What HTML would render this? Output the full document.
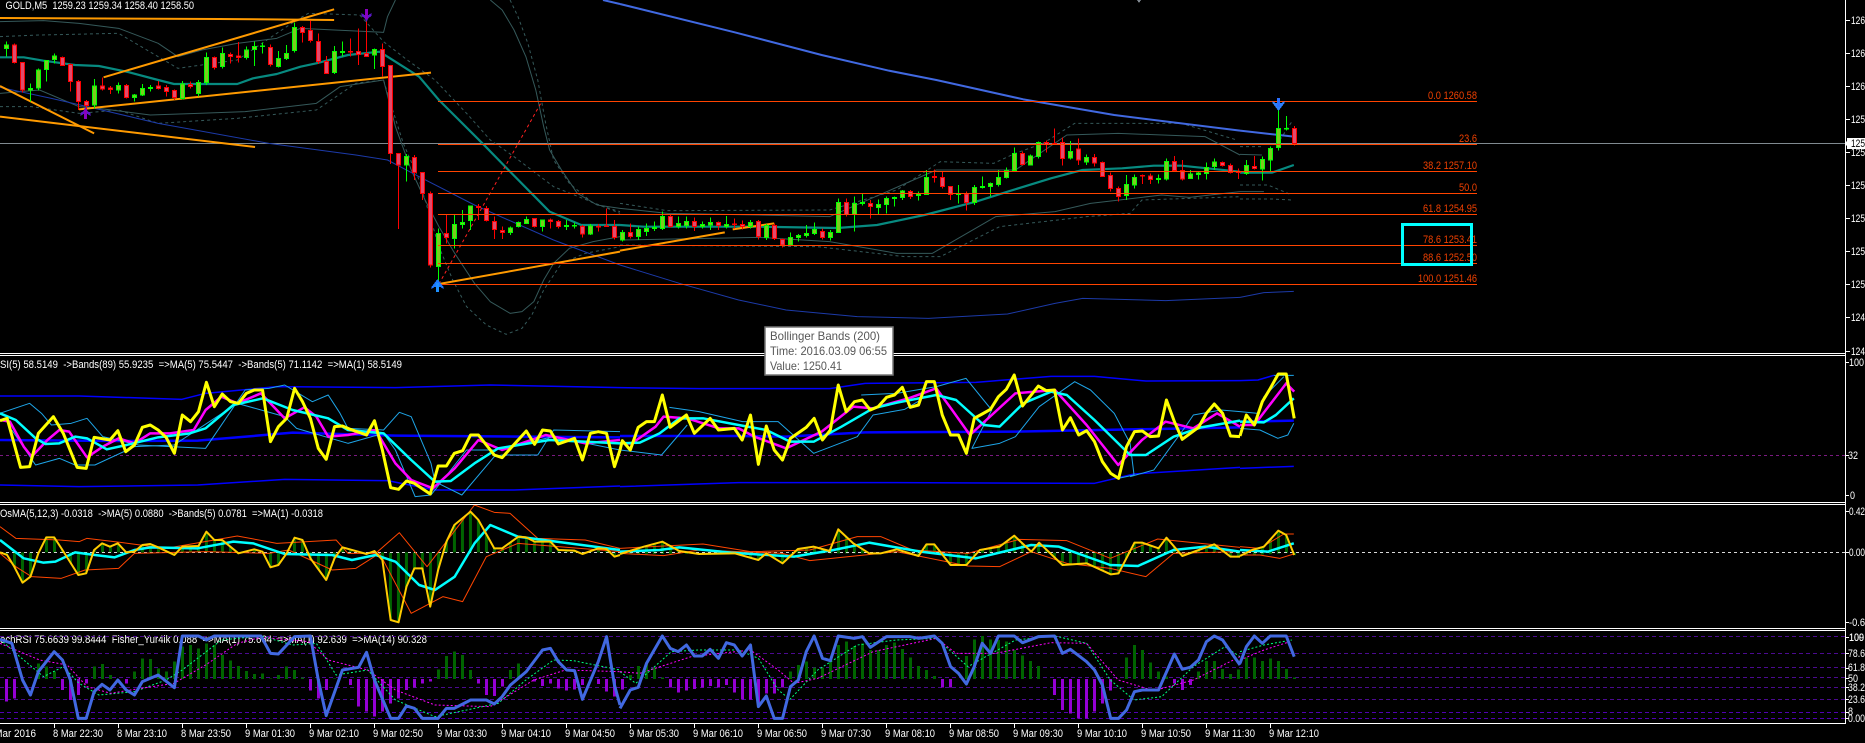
<!DOCTYPE html>
<html><head><meta charset="utf-8"><title>GOLD,M5</title>
<style>
html,body{margin:0;padding:0;background:#000;width:1865px;height:743px;overflow:hidden}
svg{display:block;position:absolute;left:0;top:0}
polyline,path.l{fill:none;vector-effect:non-scaling-stroke;stroke-linejoin:round}
.ns{vector-effect:non-scaling-stroke}
text{font-family:"Liberation Sans",sans-serif;font-size:11px;fill:#fff}
.b1 polyline{stroke:#35595a;stroke-width:1}
.d{stroke-dasharray:3 3}
.c path{vector-effect:non-scaling-stroke;shape-rendering:crispEdges}
.fib text{fill:#f04000;text-anchor:end}
</style></head><body>
<svg width="1865" height="743" viewBox="0 0 1865 743" xmlns="http://www.w3.org/2000/svg">
<defs>
<pattern id="p1" patternUnits="userSpaceOnUse" x="12.6" y="0" width="20.23" height="20"><rect width="7.6" height="20" fill="#006400"/></pattern>
<pattern id="p2" patternUnits="userSpaceOnUse" x="2.5" y="0" width="20.23" height="20"><rect width="7.6" height="20" fill="#006400"/></pattern>
<pattern id="p3" patternUnits="userSpaceOnUse" x="12.5" y="0" width="20.07" height="20"><rect width="7.5" height="20" fill="#006400"/></pattern>
</defs>

<!-- top main pane -->
<rect x="0" y="143" width="1845" height="1" fill="#808a90"/>

<g class="b1" transform="scale(.39541,.33333)">
<polyline points="0,65 110,62 200,70 300,85 400,130 450,170 510,150 600,130 700,115 760,85 970,97 980,50 1000,0"/>
<polyline points="0,280 100,270 200,320 250,325 380,345 500,340 620,335 800,310 860,260 970,240 985,310 1000,380 1040,510 1075,600 1110,680 1150,760 1200,850 1240,905 1290,940 1320,935 1350,905 1375,840 1400,790 1440,745 1500,725 1568,710"/>
<polyline points="1240,0 1270,30 1300,90 1330,170 1355,270 1375,380 1390,450 1420,510 1460,580 1510,615 1568,625"/>
<polyline class="d" points="0,110 100,105 300,100 400,170 450,205 600,180 750,60 780,40 910,45 970,125 1030,180 1100,240 1180,340 1240,420 1300,470 1400,560 1568,640"/>
<polyline class="d" points="1290,0 1310,50 1335,130 1360,240 1380,370 1400,480 1440,550 1500,610 1568,635"/>
<polyline class="d" points="0,320 80,320 200,340 300,330 400,370 600,355 800,330 900,250 970,240 985,300 1020,430 1060,540 1085,640 1110,740 1145,840 1180,920 1230,975 1280,1003 1320,985 1345,945 1375,870 1420,790 1480,760 1568,740"/>
</g>
<g class="b1" transform="translate(620,0) scale(.39541,.33333)">
<polyline points="0,625 120,640 350,645 530,650 800,510 890,510 1000,510 1130,405 1260,400 1480,410 1568,465"/>
<polyline points="0,720 350,712 530,725 700,760 790,760 950,650 1100,635 1190,610 1370,585 1440,592 1568,575"/>
<polyline class="d" points="0,610 120,632 530,630 700,570 810,485 945,490 1000,460 1070,430 1150,370 1420,370 1560,420"/>
<polyline class="d" points="0,735 500,740 720,770 810,770 960,680 1180,650 1290,640 1320,600 1568,590"/>
</g>
<g class="b1" transform="translate(1240,0) scale(.39858,.33333)">
<polyline points="0,463 55,465"/><polyline points="0,575 60,575"/>
<polyline class="d" points="0,597 80,597 130,600"/>
<polyline class="d" points="0,555 70,555 130,585"/>
<polyline class="d" points="0,440 55,440"/>
<polyline class="d" points="100,420 130,365"/>
</g>

<!-- dark blue MA -->
<g fill="none" stroke="#1c3aa8" stroke-width="1">
<polyline transform="scale(.39541,.33333)" points="0,262 130,295 240,325 400,370 680,430 900,465 980,480 1060,530 1200,615 1400,720 1568,795"/>
<polyline transform="translate(620,0) scale(.39541,.33333)" points="0,795 150,850 300,900 420,930 600,950 780,955 980,942 1100,910 1170,895 1380,902 1568,892"/>
<polyline transform="translate(1240,0) scale(.39858,.33333)" points="0,892 60,878 135,874"/>
</g>
<!-- royal blue MA -->
<g stroke="#4169e1" stroke-width="2">
<polyline transform="scale(.39541,.33333)" points="1525,0 1568,12"/>
<polyline transform="translate(620,0) scale(.39541,.33333)" points="0,12 290,97 510,165 680,212 800,240 1020,298 1250,345 1568,392"/>
<polyline transform="translate(1240,0) scale(.39858,.33333)" points="0,392 135,410"/>
</g>
<!-- teal MA -->
<g stroke="#078a80" stroke-width="2.2">
<polyline transform="scale(.39541,.33333)" points="0,172 60,172 110,182 190,195 250,198 320,215 400,240 440,252 600,252 640,235 700,222 760,200 800,190 880,165 960,155 1060,230 1110,300 1220,430 1290,515 1390,635 1470,675 1568,675"/>
<polyline transform="translate(620,0) scale(.39541,.33333)" points="0,675 60,680 350,680 550,684 650,675 770,645 900,605 980,575 1090,535 1170,510 1270,505 1350,497 1420,497 1568,515"/>
<polyline transform="translate(1240,0) scale(.39858,.33333)" points="0,518 80,518 135,495"/>
</g>
<!-- orange trendlines -->
<g stroke="#ff9a00" stroke-width="2">
<polyline transform="scale(.39541,.33333)" points="0,54 555,57 845,60"/>
<polyline transform="scale(.39541,.33333)" points="262,232 845,28"/>
<polyline transform="scale(.39541,.33333)" points="200,328 1090,218"/>
<polyline transform="scale(.39541,.33333)" points="0,258 238,400"/>
<polyline transform="scale(.39541,.33333)" points="0,350 645,441"/>
<polyline transform="scale(.39541,.33333)" points="1110,852 1568,755"/>
<polyline transform="translate(620,0) scale(.39541,.33333)" points="0,752 265,697"/>
<polyline transform="translate(620,0) scale(.39541,.33333)" points="285,688 390,670"/>
</g>
<polyline transform="scale(.39541,.33333)" points="1110,852 1370,305" stroke="#ff2020" stroke-width="1" stroke-dasharray="3 3"/>

<!-- candles -->
<g class="c" transform="scale(1,.33333)">
<path fill="none" stroke="#00ff00" d="M6.5 125V170M30.5 250V305M38.5 205V272M46.5 180V245M54.5 160V190M94.5 237V325M118.5 247V280M134.5 282V305M142.5 252V288M150.5 255V275M182.5 243V298M198.5 240V290M206.5 157V255M222.5 142V205M246.5 140V178M254.5 125V198M262.5 128V160M278.5 153V203M286.5 135V180M294.5 68V158M334.5 138V222M342.5 125V170M374.5 145V207M406.5 462V545M438.5 685V850M454.5 645V745M462.5 630V685M470.5 620V690M510.5 680V705M518.5 665V683M526.5 650V672M542.5 660V695M566.5 660V690M574.5 668V685M590.5 672V705M622.5 690V725M638.5 680V720M646.5 670V708M654.5 665V693M662.5 635V690M678.5 650V685M686.5 650V685M702.5 665V685M710.5 652V690M726.5 648V685M750.5 660V685M766.5 672V720M790.5 698V736M798.5 702V725M806.5 675V712M814.5 668V705M830.5 690V722M838.5 595V698M854.5 590V695M862.5 582V616M878.5 598V643M886.5 590V640M894.5 590V620M902.5 570V600M918.5 575V602M926.5 510V585M958.5 555V610M974.5 555V615M982.5 530V565M990.5 548V590M998.5 510V560M1006.5 502V535M1014.5 442V515M1030.5 463V497M1038.5 425V475M1070.5 423V478M1086.5 463V495M1126.5 525V600M1134.5 523V565M1158.5 523V550M1166.5 475V542M1190.5 510V537M1198.5 515V538M1206.5 488V538M1214.5 475V510M1246.5 480V525M1262.5 470V542M1270.5 440V515M1278.5 330V452M1286.5 348V392"/>
<path fill="none" stroke="#ff0000" d="M-1.5 122V145M14.5 130V190M22.5 186V278M62.5 170V198M70.5 190V275M78.5 240V330M86.5 300V330M102.5 232V272M110.5 258V282M126.5 252V295M158.5 243V268M166.5 255V290M174.5 268V300M190.5 245V265M214.5 170V208M230.5 158V190M238.5 126V188M270.5 133V200M302.5 78V128M310.5 62V128M318.5 100V192M326.5 168V222M350.5 115V170M358.5 85V195M366.5 65V170M382.5 130V230M390.5 195V492M398.5 460V687M414.5 465V540M422.5 516V600M430.5 575V803M446.5 645V730M478.5 612V660M486.5 618V665M494.5 650V717M502.5 680V717M534.5 655V682M550.5 655V685M558.5 660V685M582.5 675V712M598.5 672V695M606.5 625V680M614.5 660V718M630.5 670V715M670.5 645V682M694.5 652V693M718.5 665V690M734.5 655V685M742.5 662V688M758.5 660V718M774.5 670V720M782.5 715V743M822.5 685V718M846.5 595V650M870.5 600V655M910.5 570V597M934.5 508V548M942.5 515V565M950.5 558V600M966.5 575V632M1022.5 455V497M1046.5 422V457M1054.5 385V432M1062.5 412V497M1078.5 415V495M1094.5 462V500M1102.5 485V530M1110.5 518V575M1118.5 560V605M1142.5 523V552M1150.5 520V552M1174.5 468V515M1182.5 480V542M1222.5 484V500M1230.5 490V520M1238.5 505V537M1254.5 468V508M1294.5 378V437"/>
<path fill="#7ccb1e" stroke="#00ff00" d="M4.5 135h4V145h-4zM28.5 265h4V270h-4zM36.5 210h4V264h-4zM44.5 181h4V209h-4zM52.5 168h4V179h-4zM92.5 258h4V315h-4zM116.5 256h4V270h-4zM132.5 285h4V292h-4zM140.5 265h4V285h-4zM148.5 262h4V266h-4zM180.5 252h4V295h-4zM196.5 247h4V281h-4zM204.5 172h4V247h-4zM220.5 160h4V200h-4zM244.5 150h4V173h-4zM252.5 139h4V149h-4zM260.5 138h4V140h-4zM276.5 175h4V200h-4zM284.5 160h4V176h-4zM292.5 82h4V152h-4zM332.5 154h4V217h-4zM340.5 154h4V157h-4zM372.5 148h4V165h-4zM404.5 470h4V495h-4zM436.5 700h4V800h-4zM452.5 673h4V716h-4zM460.5 667h4V673h-4zM468.5 618h4V662h-4zM508.5 684h4V698h-4zM516.5 667h4V680h-4zM524.5 658h4V671h-4zM540.5 660h4V680h-4zM564.5 676h4V680h-4zM572.5 676h4V678h-4zM588.5 678h4V702h-4zM620.5 697h4V720h-4zM636.5 688h4V710h-4zM644.5 685h4V695h-4zM652.5 683h4V685h-4zM660.5 650h4V685h-4zM676.5 670h4V680h-4zM684.5 664h4V676h-4zM700.5 673h4V680h-4zM708.5 668h4V675h-4zM724.5 673h4V679h-4zM748.5 667h4V680h-4zM764.5 677h4V713h-4zM788.5 712h4V735h-4zM796.5 706h4V712h-4zM804.5 700h4V707h-4zM812.5 688h4V700h-4zM828.5 697h4V712h-4zM836.5 607h4V697h-4zM852.5 610h4V643h-4zM860.5 607h4V610h-4zM876.5 613h4V622h-4zM884.5 595h4V614h-4zM892.5 592h4V595h-4zM900.5 573h4V593h-4zM916.5 582h4V586h-4zM924.5 532h4V583h-4zM956.5 582h4V584h-4zM972.5 562h4V607h-4zM980.5 560h4V562h-4zM988.5 550h4V560h-4zM996.5 532h4V553h-4zM1004.5 512h4V532h-4zM1012.5 460h4V511h-4zM1028.5 468h4V495h-4zM1036.5 427h4V470h-4zM1068.5 454h4V474h-4zM1084.5 472h4V486h-4zM1124.5 553h4V587h-4zM1132.5 532h4V555h-4zM1156.5 536h4V538h-4zM1164.5 484h4V537h-4zM1188.5 522h4V536h-4zM1196.5 519h4V523h-4zM1204.5 502h4V520h-4zM1212.5 486h4V500h-4zM1244.5 496h4V520h-4zM1260.5 478h4V507h-4zM1268.5 445h4V480h-4zM1276.5 385h4V443h-4zM1284.5 385h4V387h-4z"/>
<path fill="#e24a6c" stroke="#ff0000" d="M12.5 135h4V188h-4zM20.5 187h4V270h-4zM60.5 172h4V196h-4zM68.5 194h4V245h-4zM76.5 244h4V305h-4zM84.5 305h4V317h-4zM100.5 258h4V267h-4zM108.5 264h4V268h-4zM124.5 256h4V293h-4zM156.5 258h4V266h-4zM164.5 262h4V275h-4zM172.5 271h4V293h-4zM188.5 253h4V259h-4zM212.5 172h4V203h-4zM228.5 163h4V170h-4zM236.5 168h4V172h-4zM268.5 142h4V194h-4zM300.5 83h4V97h-4zM308.5 92h4V121h-4zM316.5 125h4V184h-4zM324.5 185h4V220h-4zM348.5 154h4V156h-4zM356.5 155h4V163h-4zM364.5 161h4V170h-4zM380.5 149h4V200h-4zM388.5 196h4V460h-4zM396.5 461h4V495h-4zM412.5 473h4V517h-4zM420.5 518h4V580h-4zM428.5 581h4V795h-4zM444.5 700h4V712h-4zM476.5 620h4V623h-4zM484.5 625h4V662h-4zM492.5 664h4V688h-4zM500.5 691h4V697h-4zM532.5 656h4V680h-4zM548.5 660h4V664h-4zM556.5 665h4V680h-4zM580.5 680h4V702h-4zM596.5 679h4V681h-4zM604.5 678h4V680h-4zM612.5 680h4V712h-4zM628.5 697h4V710h-4zM668.5 650h4V680h-4zM692.5 665h4V680h-4zM716.5 668h4V677h-4zM732.5 672h4V674h-4zM740.5 673h4V680h-4zM756.5 665h4V710h-4zM772.5 677h4V716h-4zM780.5 719h4V735h-4zM820.5 694h4V712h-4zM844.5 607h4V643h-4zM868.5 611h4V620h-4zM908.5 575h4V589h-4zM932.5 530h4V533h-4zM940.5 532h4V560h-4zM948.5 560h4V583h-4zM964.5 582h4V607h-4zM1020.5 460h4V494h-4zM1044.5 427h4V433h-4zM1052.5 431h4V433h-4zM1060.5 428h4V476h-4zM1076.5 447h4V480h-4zM1092.5 472h4V489h-4zM1100.5 488h4V530h-4zM1108.5 526h4V566h-4zM1116.5 565h4V590h-4zM1140.5 526h4V528h-4zM1148.5 528h4V538h-4zM1172.5 485h4V512h-4zM1180.5 512h4V537h-4zM1220.5 487h4V496h-4zM1228.5 496h4V517h-4zM1236.5 515h4V518h-4zM1252.5 500h4V506h-4zM1292.5 385h4V431h-4z"/>
</g>

<!-- fib lines -->
<g fill="#ff4400" shape-rendering="crispEdges">
<rect x="438" y="101" width="1039" height="1"/>
<rect x="438" y="144" width="1039" height="1"/>
<rect x="438" y="171" width="1039" height="1"/>
<rect x="438" y="193" width="1039" height="1"/>
<rect x="438" y="214" width="1039" height="1"/>
<rect x="438" y="245" width="1039" height="1"/>
<rect x="438" y="263" width="1039" height="1"/>
<rect x="438" y="284" width="1039" height="1"/>
</g>
<g class="fib">
<text x="1477" y="99" textLength="49" lengthAdjust="spacingAndGlyphs">0.0 1260.58</text>
<text x="1477" y="142" textLength="18" lengthAdjust="spacingAndGlyphs">23.6</text>
<text x="1477" y="169" textLength="54" lengthAdjust="spacingAndGlyphs">38.2 1257.10</text>
<text x="1477" y="191" textLength="18" lengthAdjust="spacingAndGlyphs">50.0</text>
<text x="1477" y="212" textLength="54" lengthAdjust="spacingAndGlyphs">61.8 1254.95</text>
<text x="1477" y="243" textLength="54" lengthAdjust="spacingAndGlyphs">78.6 1253.41</text>
<text x="1477" y="261" textLength="54" lengthAdjust="spacingAndGlyphs">88.6 1252.50</text>
<text x="1477" y="282" textLength="59" lengthAdjust="spacingAndGlyphs">100.0 1251.46</text>
</g>
<rect x="1402.5" y="224.5" width="69" height="40" fill="none" stroke="#00ffff" stroke-width="3"/>

<!-- arrows -->
<g shape-rendering="crispEdges">
<path fill="#5a18c8" d="M85.5 107l2 4 3 2v3l-3-2h-4l-3 2v-3l3-2z"/><rect x="84" y="109" width="3" height="10" fill="#8a00c0"/>
<path fill="#5a18c8" d="M366.5 22l2-4 3-2v-3l-3 2h-4l-3-2v3l3 2z"/><rect x="365" y="9" width="3" height="10" fill="#8a00c0"/>
<path fill="#1e78ff" d="M437.5 279l3 4 3 4v2l-3-2h-6l-3 2v-2l3-4z"/><rect x="436" y="283" width="3" height="9" fill="#1e90ff"/>
<path fill="#2c80ff" d="M1278.5 111l3-4 3-4v-2l-3 2h-6l-3-2v2l3 4z"/><rect x="1277" y="98" width="3" height="9" fill="#2c70ff"/>
<path fill="#808890" d="M1137 0h4l-2 3z"/>
</g>
<text x="5.5" y="9" textLength="188.5" lengthAdjust="spacingAndGlyphs" fill="#e8e8e8">GOLD,M5&#160;&#160;1259.23 1259.34 1258.40 1258.50</text>

<!-- panel labels -->
<text x="0" y="368" textLength="402" lengthAdjust="spacingAndGlyphs" fill="#ddd">SI(5) 58.5149&#160;&#160;-&gt;Bands(89) 55.9235&#160;&#160;=&gt;MA(5) 75.5447&#160;&#160;-&gt;Bands(5) 71.1142&#160;&#160;=&gt;MA(1) 58.5149</text>
<text x="0" y="517" textLength="323" lengthAdjust="spacingAndGlyphs" fill="#ddd">OsMA(5,12,3) -0.0318&#160;&#160;-&gt;MA(5) 0.0880&#160;&#160;-&gt;Bands(5) 0.0781&#160;&#160;=&gt;MA(1) -0.0318</text>
<text x="0" y="643" textLength="427" lengthAdjust="spacingAndGlyphs" fill="#ddd">echRSI 75.6639 99.8444&#160;&#160;Fisher_Yur4ik 0.088&#160;&#160;=&gt;MA(1) 75.664&#160;&#160;=&gt;MA(1) 92.639&#160;&#160;=&gt;MA(14) 90.328</text>

<!-- levels -->
<line x1="0" y1="455.5" x2="1845" y2="455.5" stroke="#7a1a80" stroke-dasharray="3 3"/>
<g stroke="#4b0a90" stroke-dasharray="4 3">
<line x1="0" y1="636.5" x2="1845" y2="636.5"/><line x1="0" y1="653.5" x2="1845" y2="653.5"/>
<line x1="0" y1="667.5" x2="1845" y2="667.5"/><line x1="0" y1="677.5" x2="1845" y2="677.5"/>
<line x1="0" y1="687.5" x2="1845" y2="687.5"/><line x1="0" y1="699.5" x2="1845" y2="699.5"/>
<line x1="0" y1="712.5" x2="1845" y2="712.5" stroke="#5000b0"/><line x1="0" y1="718.5" x2="1845" y2="718.5" stroke="#5000b0"/>
</g>

<!-- RSI pane -->
<g stroke="#0000ff" stroke-width="1.5">
<polyline transform="translate(0,350) scale(.39541,.33333)" points="0,138 200,138 460,148 520,130 700,110 1000,113 1240,105 1568,113"/>
<polyline transform="translate(620,350) scale(.39541,.33333)" points="0,113 200,116 530,116 620,100 900,97 1090,79 1200,79 1330,93 1568,92"/>
<polyline transform="translate(1240,350) scale(.39858,.33333)" points="0,92 45,90 85,76"/>
<polyline transform="translate(0,350) scale(.39541,.33333)" points="0,405 200,410 500,405 720,388 980,392 1100,420 1300,420 1568,408"/>
<polyline transform="translate(620,350) scale(.39541,.33333)" points="0,410 300,398 700,398 1200,400 1300,372 1568,352"/>
<polyline transform="translate(1240,350) scale(.39858,.33333)" points="0,355 135,349"/>
</g>
<g stroke="#0000ff" stroke-width="2.5">
<polyline transform="translate(0,350) scale(.39541,.33333)" points="0,270 300,273 500,272 740,248 1000,257 1568,262"/>
<polyline transform="translate(620,350) scale(.39541,.33333)" points="0,258 300,258 420,260 620,247 1000,245 1568,232"/>
<polyline transform="translate(1240,350) scale(.39858,.33333)" points="0,215 135,212"/>
</g>
<g stroke="#1ea5e8" stroke-width="1">
<polyline transform="translate(0,350) scale(.39541,.33333)" points="0,190 75,160 105,190 130,225 180,220 220,205 260,260 350,285 520,295 620,120 680,115 720,105 790,155 830,135 860,190 880,235 970,240 1010,187 1040,200 1090,340 1100,395 1168,435 1250,320 1270,315 1360,315 1400,240 1568,245"/>
<polyline transform="translate(0,350) scale(.39541,.33333)" points="30,240 90,345 150,325 190,345 240,345 340,290 440,285 600,160 720,200 750,235 880,280 970,250 1000,300 1050,440 1090,435 1180,300 1250,300 1400,260 1568,300"/>
<polyline transform="translate(620,350) scale(.39541,.33333)" points="0,300 105,315 170,225"/>
<polyline transform="translate(620,350) scale(.39541,.33333)" points="125,172 200,185 310,215 400,215 490,310 600,260 640,195 720,178 760,150"/>
<polyline transform="translate(620,350) scale(.39541,.33333)" points="610,135 700,130 800,110 875,85 940,180 890,295 960,280 1000,260 1060,170 1150,95 1190,120 1250,190 1290,280 1300,375 1260,385"/>
<polyline transform="translate(620,350) scale(.39541,.33333)" points="1290,380 1350,360 1430,230 1450,195 1520,180 1568,185"/>
<polyline transform="translate(1240,350) scale(.39858,.33333)" points="0,185 45,190 60,140 110,80"/>
<polyline transform="translate(1240,350) scale(.39858,.33333)" points="0,235 50,240 95,265 120,255 135,220"/>
<polyline transform="translate(1240,350) scale(.39858,.33333)" points="85,76 135,76"/>
</g>
<g stroke="#ff00ff" stroke-width="2.5">
<polyline transform="translate(0,350) scale(.39541,.33333)" points="0,210 25,215 60,290 80,320 120,270 150,240 175,245 220,322 260,290 300,265 340,280 380,250 430,250 490,240 520,180 560,140 600,160 660,130 720,205 770,172 800,200 830,260 880,255 950,240 1000,340 1040,390 1095,415 1150,355 1210,270 1270,300 1380,255 1480,280 1568,270"/>
<polyline transform="translate(620,350) scale(.39541,.33333)" points="0,280 30,280 90,230 110,200 170,205 250,235 300,235 340,260 420,295 510,245 590,170 640,175 730,145 800,115 840,180 885,255 1000,130 1100,120 1180,225 1260,345 1320,270 1380,215 1450,235 1510,190 1568,230"/>
<polyline transform="translate(1240,350) scale(.39858,.33333)" points="0,225 36,225 116,100 136,125"/>
</g>
<g stroke="#00ffff" stroke-width="2.5">
<polyline transform="translate(0,350) scale(.39541,.33333)" points="0,190 40,210 90,265 115,282 150,280 190,260 220,265 270,298 320,285 400,262 480,250 520,235 590,165 665,145 740,180 830,205 880,240 970,250 1040,330 1100,395 1140,393 1200,340 1260,295 1390,270 1568,280"/>
<polyline transform="translate(620,350) scale(.39541,.33333)" points="0,280 50,278 100,250 150,205 210,205 300,225 370,240 430,275 490,275 560,230 640,175 700,158 800,135 850,150 920,225 960,230 1020,160 1090,125 1130,135 1200,210 1290,315 1330,315 1400,260 1470,232 1568,212"/>
<polyline transform="translate(1240,350) scale(.39858,.33333)" points="0,215 60,217 90,195 135,145"/>
</g>
<g stroke="#ffff00" stroke-width="3">
<polyline transform="translate(0,350) scale(.39541,.33333)" points="0,212 18,205 52,352 75,350 97,250 135,200 160,250 195,352 218,355 238,262 278,270 298,242 318,305 340,285 360,232 380,225 400,240 420,262 441,310 461,195 482,215 502,185 522,97 542,170 562,132 583,155 603,160 623,130 643,120 664,120 684,275 704,230 725,205 745,115 765,155 785,205 805,295 825,328 846,230 866,228 886,238 927,255 947,212 967,300 988,413 1008,418 1028,393 1048,400 1088,432 1108,348 1129,348 1149,310 1170,302 1190,255 1210,255 1250,315 1270,323 1291,295 1331,243 1352,283 1372,240 1392,243 1412,282 1453,265 1473,330 1493,250 1513,245 1534,250 1554,350 1568,300"/>
<polyline transform="translate(620,350) scale(.39541,.33333)" points="0,300 6,272 26,300 46,232 67,215 87,215 107,135 127,232 168,195 188,250 228,205 249,240 289,235 309,270 330,195 350,343 370,228 390,300 411,330 431,265 471,232 491,205 512,270 532,240 552,105 572,185 593,155 613,150 633,180 653,170 674,142 694,135 714,112 734,172 755,165 775,95 795,95 815,195 836,255 856,255 876,310 896,205 916,192 937,178 957,140 977,118 997,75 1018,168 1058,108 1078,122 1099,120 1119,240 1139,203 1160,255 1180,242 1200,275 1220,335 1241,370 1261,385 1281,290 1301,245 1321,243 1341,260 1362,258 1382,150 1402,215 1422,268 1463,232 1483,190 1503,162 1524,190 1544,258 1568,260"/>
<polyline transform="translate(1240,350) scale(.39858,.33333)" points="0,258 16,195 36,225 56,155 76,115 96,72 116,72 136,205"/>
</g>

<!-- MACD pane -->
<polygon transform="translate(0,350) scale(.39541,.33333)" fill="url(#p1)" points="0,607 18,615 36,650 57,698 77,680 97,610 117,562 137,562 158,600 198,675 218,670 238,600 258,580 278,590 298,580 319,607 340,605 360,585 380,582 400,592 441,615 461,590 502,588 522,545 542,570 562,570 603,610 643,598 664,605 684,652 704,645 725,610 745,563 765,570 785,625 825,690 846,625 866,592 927,612 947,603 967,630 988,810 1008,817 1028,710 1048,655 1068,655 1088,770 1108,660 1129,575 1149,525 1190,485 1210,510 1250,595 1270,595 1311,560 1331,562 1352,575 1392,575 1412,600 1453,602 1473,612 1513,595 1534,597 1554,620 1568,615 1568,607"/>
<polygon transform="translate(620,350) scale(.39541,.33333)" fill="url(#p2)" points="0,612 60,590 107,575 150,603 200,612 290,610 350,630 370,610 411,640 450,597 490,590 530,603 552,538 590,580 630,610 660,610 700,598 755,618 775,583 795,583 836,645 876,645 910,600 960,590 997,557 1040,605 1060,578 1119,645 1180,640 1241,673 1261,670 1301,578 1321,578 1362,595 1382,563 1422,618 1503,583 1544,620 1568,620 1568,607"/>
<polygon transform="translate(1240,350) scale(.39858,.33333)" fill="url(#p3)" points="0,618 30,600 60,590 96,542 116,555 136,615 143,617 143,607"/>
<line x1="0" y1="552.5" x2="1845" y2="552.5" stroke="#d8d8d8" stroke-dasharray="3 3"/>
<g stroke="#ff4500" stroke-width="1">
<polyline transform="translate(0,350) scale(.39541,.33333)" points="0,530 40,565 150,570 200,575 220,565 310,578 420,595 600,558 700,580 850,570 880,610 950,610 1010,548 1080,650 1200,465 1250,487 1290,490 1360,565 1480,570 1568,595"/>
<polyline transform="translate(0,350) scale(.39541,.33333)" points="0,610 40,650 80,680 155,685 215,660 300,655 340,610 520,605 680,610 730,600 840,660 900,655 960,610 1040,790 1120,740 1170,755 1230,620 1310,580 1568,605"/>
<polyline transform="translate(620,350) scale(.39541,.33333)" points="0,595 210,582 330,605 480,600 600,560 660,560 740,600 880,610 1010,568 1130,572 1240,625 1360,567 1568,592"/>
<polyline transform="translate(620,350) scale(.39541,.33333)" points="0,610 110,617 200,600 410,610 480,632 700,605 880,648 960,650 1040,605 1130,640 1240,655 1330,680 1400,610 1568,605"/>
<polyline transform="translate(1240,350) scale(.39858,.33333)" points="0,590 50,595 110,552 135,552"/>
<polyline transform="translate(1240,350) scale(.39858,.33333)" points="0,615 50,615 100,625 135,612"/>
</g>
<g stroke="#00ffff" stroke-width="2.5">
<polyline transform="translate(0,350) scale(.39541,.33333)" points="0,570 60,625 110,638 140,635 190,607 240,615 290,622 340,600 380,592 500,595 590,575 640,580 720,612 840,615 890,630 950,615 1000,635 1060,705 1100,720 1150,680 1200,580 1240,525 1310,560 1568,600"/>
<polyline transform="translate(620,350) scale(.39541,.33333)" points="0,605 100,600 150,592 280,608 440,620 540,600 630,578 760,605 900,625 1040,585 1110,590 1240,645 1310,648 1400,600 1480,590 1568,605"/>
<polyline transform="translate(1240,350) scale(.39858,.33333)" points="0,600 70,605 135,580"/>
</g>
<g stroke="#ffcc00" stroke-width="2">
<polyline transform="translate(0,350) scale(.39541,.33333)" points="0,607 18,615 36,650 57,698 77,680 97,610 117,562 137,562 158,600 198,675 218,670 238,600 258,580 278,590 298,580 319,607 340,605 360,585 380,582 400,592 441,615 461,590 502,588 522,545 542,570 562,570 603,610 643,598 664,605 684,652 704,645 725,610 745,563 765,570 785,625 825,690 846,625 866,592 927,612 947,603 967,630 988,810 1008,817 1028,710 1048,655 1068,655 1088,770 1108,660 1129,575 1149,525 1190,485 1210,510 1250,595 1270,595 1311,560 1331,562 1352,575 1392,575 1412,600 1453,602 1473,612 1513,595 1534,597 1554,620 1568,615"/>
<polyline transform="translate(620,350) scale(.39541,.33333)" points="0,612 60,590 107,575 150,603 200,612 290,610 350,630 370,610 411,640 450,597 490,590 530,603 552,538 590,580 630,610 660,610 700,598 755,618 775,583 795,583 836,645 876,645 910,600 960,590 997,557 1040,605 1060,578 1119,645 1180,640 1241,673 1261,670 1301,578 1321,578 1362,595 1382,563 1422,618 1503,583 1544,620 1568,620"/>
<polyline transform="translate(1240,350) scale(.39858,.33333)" points="0,618 30,600 60,590 96,542 116,555 136,615"/>
</g>

<!-- Stoch pane histogram -->
<g transform="scale(1,.33333)" shape-rendering="crispEdges">
<path class="ns" fill="none" stroke="#9400d3" stroke-width="3" style="vector-effect:non-scaling-stroke" transform="translate(0,1050)" d="M6.5 987V1055M14.5 987V1045M62.5 987V1020M70.5 987V1050M78.5 987V1035M86.5 987V1000M126.5 987V1000M310.5 987V1022M318.5 987V1045M326.5 987V1020M350.5 987V1005M358.5 987V1070M366.5 987V1085M374.5 987V1100M382.5 987V1085M390.5 987V1060M398.5 987V1045M406.5 987V1020M414.5 987V1012M422.5 987V1000M430.5 987V995M478.5 987V1000M486.5 987V1035M494.5 987V1038M502.5 987V1010M534.5 987V995M542.5 987V1008M550.5 987V1000M558.5 987V1015M566.5 987V1022M574.5 987V1018M582.5 987V1005M598.5 987V1002M606.5 987V1025M614.5 987V1040M622.5 987V1018M670.5 987V1012M678.5 987V1028M686.5 987V1022M694.5 987V1017M702.5 987V1012M710.5 987V1008M718.5 987V1012M726.5 987V1005M734.5 987V1028M742.5 987V1048M750.5 987V1048M758.5 987V1060M766.5 987V1030M774.5 987V1030M782.5 987V1012M942.5 987V1012M950.5 987V1012M1054.5 987V1035M1062.5 987V1080M1070.5 987V1090M1078.5 987V1105M1086.5 987V1105M1094.5 987V1085M1102.5 987V1060M1110.5 987V1022M1174.5 987V1000M1182.5 987V1020M1190.5 987V1005"/>
<path class="ns" fill="none" stroke="#006400" stroke-width="3" style="vector-effect:non-scaling-stroke" transform="translate(0,1050)" d="M38.5 987V940M46.5 987V950M54.5 987V965M94.5 987V950M102.5 987V942M110.5 987V975M134.5 987V965M142.5 987V925M150.5 987V927M158.5 987V955M166.5 987V965M174.5 987V935M182.5 987V890M190.5 987V885M198.5 987V895M206.5 987V880M214.5 987V885M222.5 987V915M230.5 987V932M238.5 987V948M246.5 987V963M254.5 987V972M262.5 987V970M270.5 987V985M278.5 987V975M286.5 987V950M294.5 987V960M302.5 987V983M334.5 987V985M438.5 987V958M446.5 987V918M454.5 987V905M462.5 987V915M470.5 987V960M510.5 987V960M518.5 987V940M630.5 987V975M638.5 987V948M646.5 987V937M654.5 987V952M662.5 987V982M790.5 987V965M798.5 987V945M806.5 987V935M814.5 987V952M822.5 987V953M830.5 987V930M838.5 987V885M846.5 987V875M854.5 987V888M862.5 987V880M870.5 987V900M878.5 987V900M886.5 987V885M894.5 987V878M902.5 987V897M910.5 987V923M918.5 987V948M926.5 987V960M934.5 987V978M966.5 987V918M974.5 987V868M982.5 987V858M990.5 987V868M998.5 987V870M1006.5 987V875M1014.5 987V900M1022.5 987V917M1030.5 987V933M1038.5 987V948M1126.5 987V923M1134.5 987V885M1142.5 987V900M1150.5 987V937M1158.5 987V965M1166.5 987V980M1198.5 987V965M1206.5 987V933M1214.5 987V933M1222.5 987V957M1230.5 987V972M1238.5 987V958M1246.5 987V922M1254.5 987V923M1262.5 987V933M1270.5 987V925M1278.5 987V933M1286.5 987V957M1294.5 987V982"/>
</g>
<g stroke="#00ff7f" stroke-width="1" stroke-dasharray="2 2">
<polyline transform="translate(0,350) scale(.39541,.33333)" points="0,868 50,920 110,980 160,950 200,1000 250,1035 340,1025 420,990 461,960 560,870 660,858 740,885 800,880 850,975 930,960 1000,1050 1100,1100 1200,1075 1260,1060 1330,990 1400,930 1450,932 1568,960"/>
<polyline transform="translate(620,350) scale(.39541,.33333)" points="0,965 40,1000 130,905 200,900 300,900 350,925 400,1020 430,1048 500,960 600,885 700,870 800,865 880,950 1000,870 1100,858 1180,880 1240,990 1300,1050 1370,1040 1450,950 1530,890 1568,920"/>
<polyline transform="translate(1240,350) scale(.39858,.33333)" points="0,905 60,885 130,870"/>
</g>
<g stroke="#ff00ff" stroke-width="1" stroke-dasharray="2 2">
<polyline transform="translate(0,350) scale(.39541,.33333)" points="0,880 100,930 170,945 220,1010 280,1030 330,1020 440,1000 520,945 600,880 660,862 780,875 830,930 930,960 1000,1020 1100,1065 1240,1070 1350,990 1430,960 1568,965"/>
<polyline transform="translate(620,350) scale(.39541,.33333)" points="0,965 50,970 180,920 330,900 400,960 440,1000 500,985 640,905 800,865 850,910 950,910 1090,878 1180,880 1260,990 1350,1022 1450,990 1568,920"/>
<polyline transform="translate(1240,350) scale(.39858,.33333)" points="0,930 60,900 125,875"/>
</g>
<g stroke="#4169e1" stroke-width="3">
<polyline transform="translate(0,350) scale(.39541,.33333)" points="0,868 30,880 57,990 77,1035 97,965 137,905 158,930 178,990 198,1105 218,1105 238,1025 258,1003 278,1020 298,990 319,1020 340,1035 360,995 400,975 441,1013 461,858 502,858 522,870 542,858 660,858 684,910 704,912 745,860 785,858 805,990 825,1097 866,960 907,952 927,907 947,990 988,1105 1008,1105 1028,1068 1048,1075 1068,1105 1108,1105 1129,1075 1149,1075 1190,1050 1230,1050 1250,1062 1270,1040 1291,1005 1331,965 1372,900 1392,895 1412,935 1433,960 1453,962 1473,1048 1513,935 1534,860 1554,1005 1568,1065"/>
<polyline transform="translate(620,350) scale(.39541,.33333)" points="0,1075 26,1020 46,1012 67,940 107,858 127,895 147,905 168,885 188,918 208,918 228,898 249,925 269,878 289,885 309,918 330,885 350,1070 370,1038 390,1105 411,1105 431,1010 451,990 471,905 491,858 512,925 532,932 552,858 593,865 613,860 633,892 674,860 734,860 755,865 795,858 815,880 836,950 856,970 876,1002 896,950 916,880 937,910 957,858 997,858 1018,878 1058,860 1099,858 1119,910 1139,898 1180,935 1200,960 1220,1005 1241,1105 1261,1105 1281,1080 1301,1025 1321,1020 1362,1020 1402,912 1422,958 1442,952 1463,930 1483,875 1503,858 1524,870 1568,945"/>
<polyline transform="translate(1240,350) scale(.39858,.33333)" points="0,940 16,890 36,858 56,880 76,858 116,858 136,920"/>
</g>

<!-- frame lines -->
<rect x="0" y="353" width="1846" height="1" fill="#fff"/><rect x="0" y="355" width="1846" height="1" fill="#fff"/>
<rect x="0" y="502" width="1846" height="1" fill="#fff"/><rect x="0" y="504" width="1846" height="1" fill="#fff"/>
<rect x="0" y="628" width="1846" height="1" fill="#fff"/><rect x="0" y="630" width="1846" height="1" fill="#fff"/>
<rect x="0" y="723" width="1846" height="1" fill="#fff"/>
<rect x="1845" y="0" width="1" height="724" fill="#fff"/>

<!-- price axis ticks -->
<path fill="none" stroke="#fff" d="M1846 20.5h4M1846 53.5h4M1846 86.5h4M1846 119.5h4M1846 152.5h4M1846 185.5h4M1846 218.5h4M1846 251.5h4M1846 284.5h4M1846 317.5h4M1846 351.5h4M1846 362.5h3M1846 455.5h3M1846 495.5h3M1846 511.5h3M1846 552.5h3M1846 622.5h3M1846 637.5h3M1846 653.5h3M1846 668.5h3M1846 678.5h3M1846 687.5h3M1846 699.5h3M1846 712.5h3M1846 718.5h3"/>
<g>
<text x="1851" y="24" textLength="14" lengthAdjust="spacingAndGlyphs">126</text>
<text x="1851" y="57" textLength="14" lengthAdjust="spacingAndGlyphs">126</text>
<text x="1851" y="90" textLength="14" lengthAdjust="spacingAndGlyphs">126</text>
<text x="1851" y="123" textLength="14" lengthAdjust="spacingAndGlyphs">125</text>
<text x="1851" y="156" textLength="14" lengthAdjust="spacingAndGlyphs">125</text>
<text x="1851" y="189" textLength="14" lengthAdjust="spacingAndGlyphs">125</text>
<text x="1851" y="222" textLength="14" lengthAdjust="spacingAndGlyphs">125</text>
<text x="1851" y="255" textLength="14" lengthAdjust="spacingAndGlyphs">125</text>
<text x="1851" y="288" textLength="14" lengthAdjust="spacingAndGlyphs">125</text>
<text x="1851" y="321" textLength="14" lengthAdjust="spacingAndGlyphs">124</text>
<text x="1851" y="355" textLength="14" lengthAdjust="spacingAndGlyphs">124</text>
</g>
<rect x="1847" y="138" width="18" height="11" fill="#fff"/>
<path d="M1845 143.5l3-4v8z" fill="#fff"/>
<text x="1851" y="147" textLength="14" lengthAdjust="spacingAndGlyphs" style="fill:#000">125</text>
<g>
<text x="1849" y="366" textLength="15" lengthAdjust="spacingAndGlyphs">100</text>
<text x="1848" y="459" textLength="10" lengthAdjust="spacingAndGlyphs">32</text>
<text x="1850" y="499" textLength="5" lengthAdjust="spacingAndGlyphs">0</text>
<text x="1849" y="515" textLength="16" lengthAdjust="spacingAndGlyphs">0.42</text>
<text x="1849" y="556" textLength="16" lengthAdjust="spacingAndGlyphs">0.00</text>
<text x="1849" y="626" textLength="16" lengthAdjust="spacingAndGlyphs">-0.6</text>
<text x="1849" y="641" textLength="15" lengthAdjust="spacingAndGlyphs">100</text>
<text x="1849" y="641" textLength="15" lengthAdjust="spacingAndGlyphs">109</text>
<text x="1848" y="657" textLength="17" lengthAdjust="spacingAndGlyphs">78.6</text>
<text x="1848" y="671" textLength="17" lengthAdjust="spacingAndGlyphs">61.8</text>
<text x="1848" y="682" textLength="10" lengthAdjust="spacingAndGlyphs">50</text>
<text x="1848" y="691" textLength="17" lengthAdjust="spacingAndGlyphs">38.2</text>
<text x="1848" y="703" textLength="17" lengthAdjust="spacingAndGlyphs">23.6</text>
<text x="1848" y="715" textLength="5" lengthAdjust="spacingAndGlyphs">8</text>
<text x="1848" y="722" textLength="17" lengthAdjust="spacingAndGlyphs">0.00</text>
</g>

<!-- time axis -->
<path fill="none" stroke="#fff" d="M54.5 724v4M118.5 724v4M182.5 724v4M246.5 724v4M310.5 724v4M374.5 724v4M438.5 724v4M502.5 724v4M566.5 724v4M630.5 724v4M694.5 724v4M758.5 724v4M822.5 724v4M886.5 724v4M950.5 724v4M1014.5 724v4M1078.5 724v4M1142.5 724v4M1206.5 724v4M1270.5 724v4"/>
<g>
<text x="-14" y="737" textLength="50" lengthAdjust="spacingAndGlyphs">8 Mar 2016</text>
<text x="53" y="737" textLength="50" lengthAdjust="spacingAndGlyphs">8 Mar 22:30</text>
<text x="117" y="737" textLength="50" lengthAdjust="spacingAndGlyphs">8 Mar 23:10</text>
<text x="181" y="737" textLength="50" lengthAdjust="spacingAndGlyphs">8 Mar 23:50</text>
<text x="245" y="737" textLength="50" lengthAdjust="spacingAndGlyphs">9 Mar 01:30</text>
<text x="309" y="737" textLength="50" lengthAdjust="spacingAndGlyphs">9 Mar 02:10</text>
<text x="373" y="737" textLength="50" lengthAdjust="spacingAndGlyphs">9 Mar 02:50</text>
<text x="437" y="737" textLength="50" lengthAdjust="spacingAndGlyphs">9 Mar 03:30</text>
<text x="501" y="737" textLength="50" lengthAdjust="spacingAndGlyphs">9 Mar 04:10</text>
<text x="565" y="737" textLength="50" lengthAdjust="spacingAndGlyphs">9 Mar 04:50</text>
<text x="629" y="737" textLength="50" lengthAdjust="spacingAndGlyphs">9 Mar 05:30</text>
<text x="693" y="737" textLength="50" lengthAdjust="spacingAndGlyphs">9 Mar 06:10</text>
<text x="757" y="737" textLength="50" lengthAdjust="spacingAndGlyphs">9 Mar 06:50</text>
<text x="821" y="737" textLength="50" lengthAdjust="spacingAndGlyphs">9 Mar 07:30</text>
<text x="885" y="737" textLength="50" lengthAdjust="spacingAndGlyphs">9 Mar 08:10</text>
<text x="949" y="737" textLength="50" lengthAdjust="spacingAndGlyphs">9 Mar 08:50</text>
<text x="1013" y="737" textLength="50" lengthAdjust="spacingAndGlyphs">9 Mar 09:30</text>
<text x="1077" y="737" textLength="50" lengthAdjust="spacingAndGlyphs">9 Mar 10:10</text>
<text x="1141" y="737" textLength="50" lengthAdjust="spacingAndGlyphs">9 Mar 10:50</text>
<text x="1205" y="737" textLength="50" lengthAdjust="spacingAndGlyphs">9 Mar 11:30</text>
<text x="1269" y="737" textLength="50" lengthAdjust="spacingAndGlyphs">9 Mar 12:10</text>
</g>

<!-- tooltip -->
<rect x="765" y="327" width="128" height="48" fill="#fff" stroke="#767676" stroke-width="1.5"/>
<g style="font-size:12px">
<text x="770" y="340" textLength="110" lengthAdjust="spacingAndGlyphs" style="fill:#575757;font-size:12px">Bollinger Bands (200)</text>
<text x="770" y="355" textLength="117" lengthAdjust="spacingAndGlyphs" style="fill:#575757;font-size:12px">Time: 2016.03.09 06:55</text>
<text x="770" y="370" textLength="72" lengthAdjust="spacingAndGlyphs" style="fill:#575757;font-size:12px">Value: 1250.41</text>
</g>
</svg>
</body></html>
